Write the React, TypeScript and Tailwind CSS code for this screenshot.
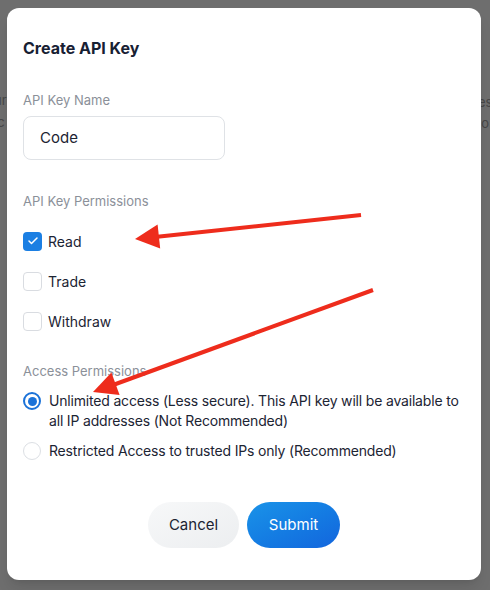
import { Check } from "lucide-react";

const font = { fontFamily: "Inter, 'Noto Sans', sans-serif" };

const Checkbox = ({ label, checked }: { label: string; checked?: boolean }) => (
  <div className="flex h-10 items-center gap-[6px]">
    {checked ? (
      <span className="flex h-[19px] w-[19px] items-center justify-center rounded-[4px] bg-[#1b7fe3]">
        <Check className="h-3 w-3 text-white" strokeWidth={3} />
      </span>
    ) : (
      <span className="h-[19px] w-[19px] rounded-[4px] border-[1.5px] border-[#d9dce1] bg-white" />
    )}
    <span className="text-[14px] text-[#1c2433]">{label}</span>
  </div>
);

const Radio = ({ children, checked }: { children: React.ReactNode; checked?: boolean }) => (
  <div className="flex items-start gap-[8px]">
    <span
      className={
        checked
          ? "mt-[1px] flex h-[18px] w-[18px] shrink-0 items-center justify-center rounded-full border-2 border-[#1b72d8]"
          : "mt-[1px] h-[18px] w-[18px] shrink-0 rounded-full border-[1.5px] border-[#dcdfe4]"
      }
    >
      {checked && <span className="h-[9px] w-[9px] rounded-full bg-[#1b72d8]" />}
    </span>
    <span className="text-[14px] leading-5 tracking-[-0.18px] text-[#1c2433]">{children}</span>
  </div>
);

export default function App() {
  return (
    <div className="relative h-[590px] w-[490px] overflow-hidden bg-[#6e6e6e]" style={font}>
      {/* page text peeking behind the dialog */}
      <span className="absolute left-[-6px] top-[91px] text-[13px] text-[#474747]">ur</span>
      <span className="absolute left-[-14px] top-[113px] text-[13px] text-[#474747]">n c</span>
      <span className="absolute left-[478px] top-[93px] text-[13px] text-[#474747]">es</span>
      <span className="absolute left-[478px] top-[114px] text-[13px] text-[#474747]">io</span>

      <div className="relative ml-[7px] mt-[8px] h-[572px] w-[474px] rounded-[12px] bg-white px-4 pt-[28px] shadow-lg">
        <h2 className="text-[16px] font-bold leading-6 text-[#172033]">Create API Key</h2>

        <p className="mt-[30px] text-[13px] leading-5 text-[#8b9099]">API Key Name</p>
        <div className="mt-[6px] flex h-[44px] w-[202px] items-center rounded-[8px] border border-[#dfe2e6] px-4 text-[15px] text-[#1c2433]">
          Code
        </div>

        <p className="mt-[31px] text-[13px] leading-5 text-[#8b9099]">API Key Permissions</p>
        <div className="mt-[10px]">
          <Checkbox label="Read" checked />
          <Checkbox label="Trade" />
          <Checkbox label="Withdraw" />
        </div>

        <p className="mt-[20px] text-[13px] leading-5 text-[#8b9099]">Access Permissions</p>
        <div className="mt-[10px] flex flex-col gap-[10px]">
          <Radio checked>
            Unlimited access (Less secure). This API key will be available to all IP addresses (Not Recommended)
          </Radio>
          <Radio>Restricted Access to trusted IPs only (Recommended)</Radio>
        </div>

        <div className="mt-[41px] flex justify-center gap-2">
          <button className="h-[46px] w-[91px] rounded-full bg-gradient-to-br from-[#f7f8f9] to-[#eceef0] text-[15px] text-[#1c2433]">
            Cancel
          </button>
          <button className="h-[46px] w-[93px] rounded-full bg-gradient-to-br from-[#1b93e8] to-[#1465dd] text-[15px] text-white">
            Submit
          </button>
        </div>
      </div>

      {/* annotation arrows */}
      <svg className="absolute left-0 top-0" width="490" height="590" viewBox="0 0 490 590">
        <line x1="361" y1="215" x2="155" y2="237" stroke="#ee2c1c" strokeWidth="4" />
        <polygon points="135,239 157.6,224.6 160.2,248.4" fill="#ee2c1c" />
        <line x1="373" y1="290" x2="113" y2="385" stroke="#ee2c1c" strokeWidth="4" />
        <polygon points="93,392 111.4,372.5 119.6,395.1" fill="#ee2c1c" />
      </svg>
    </div>
  );
}
